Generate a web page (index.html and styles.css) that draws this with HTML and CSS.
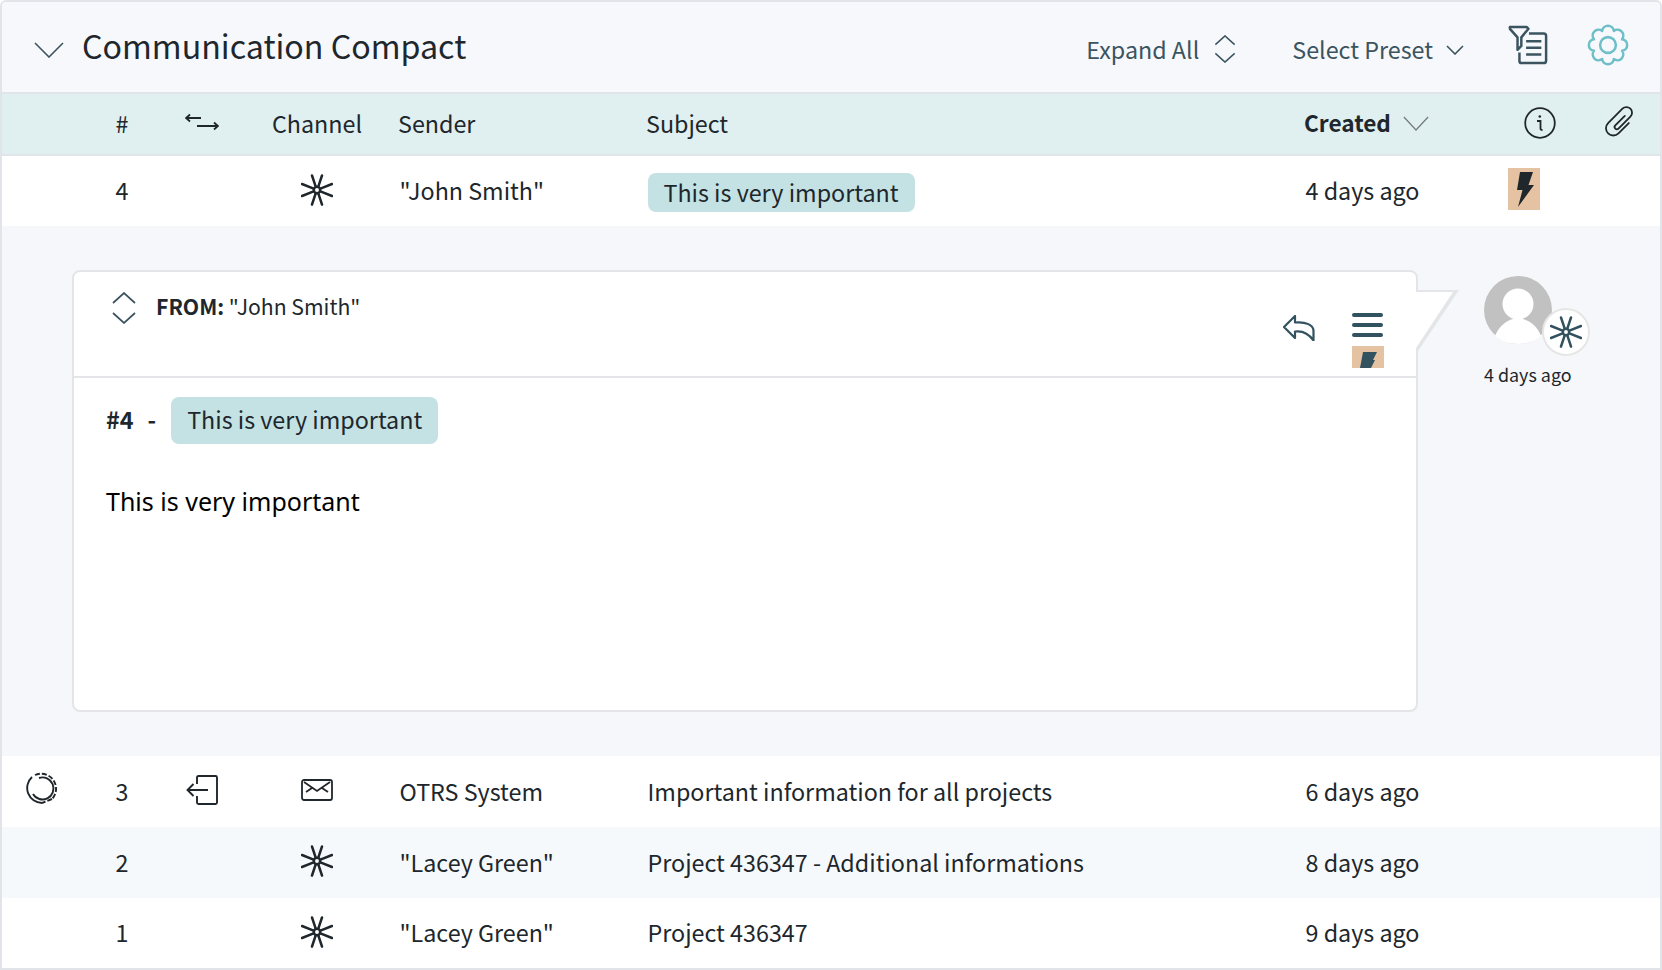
FILE: index.html
```html
<!DOCTYPE html>
<html lang="en">
<head>
    <meta charset="UTF-8">
    <title>Communication Compact</title>
    <link rel="stylesheet" href="styles.css">
</head>
<body>
    <svg class="defs" width="0" height="0">
        <symbol id="chat" viewBox="0 0 32 32">
            <path d="M11 1.500L14.700 12.700M21 1.500L17.300 12.700M1 10L12.600 14.600M31 10L19.400 14.600M1 22L12.600 17.400M31 22L19.400 17.400M11 30.500L14.700 19.300M21 30.500L17.300 19.300" fill="none" stroke="currentColor" stroke-width="2.500" stroke-linecap="round"/>
            <circle cx="16" cy="16" r="3.200" fill="none" stroke="currentColor" stroke-width="2.500"/>
        </symbol>
        <symbol id="updown" viewBox="0 0 24 32">
            <path d="M1 11L12 1L23 11M1 21L12 31L23 21" fill="none" stroke="currentColor" stroke-width="1.700"/>
        </symbol>
        <symbol id="bolt" viewBox="0 0 32 42">
            <path d="M12 4H25L20.500 17H26L10 39L14.500 22H9Z" fill="currentColor"/>
        </symbol>
    </svg>

    <div class="widget">
        <header class="widget-head">
            <svg class="collapse" viewBox="0 0 30 16"><path d="M1 1L15 15L29 1" fill="none" stroke="currentColor" stroke-width="1.600"/></svg>
            <h1 class="widget-title">Communication Compact</h1>
            <div class="widget-actions">
                <span class="action expand">Expand All <svg class="expand-icon"><use href="#updown"/></svg></span>
                <span class="action preset">Select Preset
                    <svg class="preset-icon" viewBox="0 0 18 10"><path d="M1 1L9 9L17 1" fill="none" stroke="currentColor" stroke-width="1.600"/></svg>
                </span>
                <svg class="filter-icon" viewBox="0 0 42 42">
                    <path d="M2 2H19.500L21.500 4L14 13V22L10 26V13L2 4Z" fill="none" stroke="currentColor" stroke-width="2.600" stroke-linejoin="round"/>
                    <path d="M22 9H37.500Q40 9 40 11.500V37.500Q40 40 37.500 40H14Q12 40 12 37.500V29M19 17H35M19 24H35M19 31H35" fill="none" stroke="currentColor" stroke-width="2.600"/>
                </svg>
                <svg class="gear-icon" viewBox="0 0 40 40">
                    <circle cx="20" cy="20" r="7.500" fill="none" stroke="currentColor" stroke-width="2.400"/>
                    <path d="M14.450 6.600A5.600 5.600 0 0 1 25.550 6.600A5.600 5.600 0 0 1 33.400 14.450A5.600 5.600 0 0 1 33.400 25.550A5.600 5.600 0 0 1 25.550 33.400A5.600 5.600 0 0 1 14.450 33.400A5.600 5.600 0 0 1 6.600 25.550A5.600 5.600 0 0 1 6.600 14.450A5.600 5.600 0 0 1 14.450 6.600Z" fill="none" stroke="currentColor" stroke-width="2.400" stroke-linejoin="round"/>
                </svg>
            </div>
        </header>

        <div class="row row-head">
            <span class="cell center">#</span>
            <span class="cell center">
                <svg class="dir-icon" viewBox="0 0 34 18"><path d="M1 5H16M5 1.500L1 5L5 8.500M12 13H33M29 9.500L33 13L29 16.500" fill="none" stroke="currentColor" stroke-width="1.800"/></svg>
            </span>
            <span class="cell center">Channel</span>
            <span class="cell">Sender</span>
            <span class="cell">Subject</span>
            <span class="cell created-head">Created
                <svg class="sort-icon" viewBox="0 0 28 16"><path d="M1 1L14 15L27 1" fill="none" stroke="currentColor" stroke-width="1.300"/></svg>
            </span>
            <span class="cell center">
                <svg class="info-icon" viewBox="0 0 32 32"><circle cx="16" cy="16" r="14.800" fill="none" stroke="currentColor" stroke-width="1.800"/><path d="M13 14H16.500V21.500Q16.500 23 18.500 23" fill="none" stroke="currentColor" stroke-width="1.800"/><circle cx="15.800" cy="9.500" r="1.300" fill="currentColor"/></svg>
            </span>
            <span class="cell center">
                <svg class="clip-icon" viewBox="0 0 32 32"><path d="M5 -3V10A6.500 6.500 0 0 1 -8 10V-8A5 5 0 0 1 2 -8V7A2 2 0 0 1 -2 7V-5" transform="translate(15.500 15.500) rotate(45)" fill="none" stroke="currentColor" stroke-width="1.600" stroke-linecap="round"/></svg>
            </span>
        </div>

        <div class="row row-first">
            <span class="cell center">4</span>
            <span class="cell"></span>
            <span class="cell center"><svg class="chan-icon"><use href="#chat"/></svg></span>
            <span class="cell sender">"John Smith"</span>
            <span class="cell subject"><span class="tag tag-row">This is very important</span></span>
            <span class="cell sender">4 days ago</span>
            <span class="cell"><span class="prio"><svg class="prio-icon"><use href="#bolt"/></svg></span></span>
            <span class="cell"></span>
        </div>

        <section class="thread">
            <article class="card">
                <div class="card-head">
                    <svg class="card-toggle"><use href="#updown"/></svg>
                    <div class="card-from"><b>FROM:</b> "John Smith"</div>
                    <div class="card-tools">
                        <svg class="reply-icon" viewBox="0 0 32 26"><path d="M12 1L1 12L12 23V16.500C20 15.500 26 19 30.500 25.500V16C30.500 10 23 6.500 12 7.500Z" fill="none" stroke="currentColor" stroke-width="2.200" stroke-linejoin="round"/></svg>
                        <div class="tool-stack">
                            <div class="burger"><i></i><i></i><i></i></div>
                            <span class="prio-clip"><svg class="clip-bolt" viewBox="0 0 32 22"><path d="M11 6H25L21 14H23L19 22H8Z" fill="currentColor"/></svg></span>
                        </div>
                    </div>
                </div>
                <div class="card-body">
                    <div class="card-subject"><b class="num">#4</b><b class="dash">-</b><span class="tag tag-big">This is very important</span></div>
                    <p class="card-text">This is very important</p>
                </div>
            </article>
            <aside class="author">
                <div class="avatar">
                    <svg class="avatar-img" viewBox="0 0 68 68"><circle cx="34" cy="34" r="34" fill="#c1c1c1"/><circle cx="34" cy="28" r="15.500" fill="#fff"/><path d="M11 60C15 50 23 43 34 42C45 43 53 50 57 60C51 65 43 68 34 68C25 68 17 65 11 60Z" fill="#fff"/></svg>
                    <span class="avatar-badge"><svg class="badge-icon"><use href="#chat"/></svg></span>
                </div>
                <div class="author-time">4 days ago</div>
            </aside>
        </section>

        <div class="row">
            <span class="cell flag">
                <svg class="flag-icon" viewBox="0 0 32 32">
                    <path d="M16 31A15 15 0 0 1 6 5" fill="none" stroke="currentColor" stroke-width="1.900"/>
                    <path d="M9 3A15 15 0 0 1 26 27M26 27L16 31" fill="none" stroke="currentColor" stroke-width="1.900" stroke-dasharray="5 2"/>
                    <path d="M13 6A11 11 0 1 1 7 22" fill="none" stroke="currentColor" stroke-width="1.900"/>
                </svg>
            </span>
            <span class="cell center">3</span>
            <span class="cell center">
                <svg class="in-icon" viewBox="0 0 32 30"><path d="M11 9V2.500Q11 1 12.500 1H29.500Q31 1 31 2.500V27.500Q31 29 29.500 29H12.500Q11 29 11 27.500V21M22 15H1.500M7.500 9L1.500 15L7.500 21" fill="none" stroke="currentColor" stroke-width="1.900"/></svg>
            </span>
            <span class="cell center">
                <svg class="mail-icon" viewBox="0 0 32 22"><rect x="1" y="1" width="30" height="20" rx="2" fill="none" stroke="currentColor" stroke-width="1.800"/><path d="M3 3L16 12L29 3M5 13L11 9M27 13L21 9" fill="none" stroke="currentColor" stroke-width="1.800"/></svg>
            </span>
            <span class="cell sender">OTRS System</span>
            <span class="cell subject">Important information for all projects</span>
            <span class="cell sender">6 days ago</span>
            <span class="cell"></span>
            <span class="cell"></span>
        </div>
        <div class="row row-alt">
            <span class="cell center">2</span>
            <span class="cell"></span>
            <span class="cell center"><svg class="chan-icon"><use href="#chat"/></svg></span>
            <span class="cell sender">"Lacey Green"</span>
            <span class="cell subject">Project 436347 - Additional informations</span>
            <span class="cell sender">8 days ago</span>
            <span class="cell"></span>
            <span class="cell"></span>
        </div>
        <div class="row row-last">
            <span class="cell center">1</span>
            <span class="cell"></span>
            <span class="cell center"><svg class="chan-icon"><use href="#chat"/></svg></span>
            <span class="cell sender">"Lacey Green"</span>
            <span class="cell subject">Project 436347</span>
            <span class="cell sender">9 days ago</span>
            <span class="cell"></span>
            <span class="cell"></span>
        </div>
    </div>
</body>
</html>
```

FILE: styles.css
```css
* {
    box-sizing: border-box;
}
body {
    margin: 0;
    background: #fff;
    color: #20272c;
    font-family: "Noto Sans CJK SC", "Noto Sans", sans-serif;
    font-size: 23.3px;
    line-height: 32px;
}
.defs {
    display: block;
    height: 0;
}
.widget {
    width: 1662px;
    height: 970px;
    display: flex;
    flex-direction: column;
    border: 2px solid #e1e4e8;
    border-radius: 6px 6px 0 0;
    overflow: hidden;
}
.widget-head {
    height: 92px;
    flex: none;
    display: flex;
    align-items: center;
    padding: 0 31px 0 32px;
    background: #f7f8fc;
    border-bottom: 2px solid #e1e4e8;
}
.collapse {
    width: 30px;
    height: 16px;
    margin-top: 6px;
    color: #3c5560;
}
.widget-title {
    margin: 0 0 4px 18px;
    font-size: 32.2px;
    font-weight: 400;
    line-height: 44px;
}
.widget-actions {
    margin-left: auto;
    display: flex;
    align-items: center;
    color: #3b5460;
}
.action {
    display: flex;
    align-items: center;
    margin-top: 4px;
}
.expand-icon {
    width: 22px;
    height: 28px;
    margin: 0 0 0 15px;
}
.preset {
    margin-left: 56px;
}
.preset-icon {
    width: 18px;
    height: 10px;
    margin: 2px 0 0 13px;
}
.filter-icon {
    width: 40px;
    height: 42px;
    margin: -4px 0 0 44px;
}
.gear-icon {
    width: 42px;
    height: 42px;
    margin: -4px 0 0 39px;
    color: #6fbfc8;
}
.row {
    flex: none;
    height: 71px;
    display: grid;
    grid-template-columns: 80px 80px 80px 150px 248px 658px 202px 80px 80px;
    align-items: center;
    padding-bottom: 2px;
    background: #fff;
}
.row-first,
.row-last {
    height: 70px;
}
.row > .cell:first-child:not(.flag) {
    grid-column: 2;
}
.row-alt {
    background: #f6f9fb;
}
.row-head {
    height: 62px;
    background: #e0f0f0;
    border-bottom: 2px solid #e1e4e8;
}
.cell.center {
    text-align: center;
}
.row-head .cell {
    padding-left: 6px;
}
.row-head .cell.center {
    padding-left: 0;
}
.flag {
    padding-left: 24px;
    display: flex;
}
.sender,
.subject {
    padding-left: 7.5px;
}
.created-head {
    display: flex;
    align-items: center;
    font-size: 22.6px;
    font-weight: 700;
}
.sort-icon {
    width: 26px;
    height: 15px;
    margin-left: 12px;
    color: #74797c;
}
.dir-icon {
    width: 34px;
    height: 18px;
    vertical-align: middle;
    margin-top: -9px;
}
.info-icon {
    width: 32px;
    height: 32px;
    vertical-align: middle;
    margin-top: -6px;
}
.clip-icon {
    width: 36px;
    height: 36px;
    vertical-align: middle;
    margin: -7px 0 0 6px;
}
.chan-icon {
    display: block;
    width: 32px;
    height: 32px;
    margin: -1px auto 0;
}
.tag {
    display: inline-block;
    padding: 0 16px;
    height: 39px;
    line-height: 39px;
    background: #c4e2e3;
    border-radius: 8px;
}
.tag-row {
    margin-top: 4px;
}
.tag-big {
    height: 47px;
    line-height: 44px;
}
.num,
.dash {
    margin-bottom: 3px;
}
.prio {
    display: block;
    width: 32px;
    height: 42px;
    margin: -2px 0 0 8px;
    background: #e5c3a2;
}
.prio-icon {
    display: block;
    width: 32px;
    height: 42px;
}
.thread {
    flex: none;
    height: 530px;
    display: flex;
    align-items: flex-start;
    padding: 44px 0 0 70px;
    background: #f6f7fb;
}
.card {
    position: relative;
    width: 1346px;
    height: 442px;
    background: #fff;
    border: 2px solid #e4e5e8;
    border-radius: 8px;
}
/* speech tail on the right of the card */
.card::after {
    content: "";
    position: absolute;
    top: 18px;
    left: 100%;
    width: 43px;
    height: 64px;
    background: #e4e5e8;
    clip-path: polygon(0 0, 100% 0, 0 100%);
}
.card::before {
    content: "";
    position: absolute;
    z-index: 1;
    top: 20px;
    left: 100%;
    width: 37px;
    height: 56px;
    background: #fff;
    clip-path: polygon(0 0, 100% 0, 0 100%);
}
.card-head {
    height: 106px;
    display: flex;
    padding: 20px 32px 0 38px;
    border-bottom: 2px solid #e4e5e8;
}
.card-toggle {
    width: 24px;
    height: 32px;
    color: #3b5460;
}
.card-from {
    margin-left: 20px;
    font-size: 21.2px;
    line-height: 28px;
}
.card-tools {
    margin-left: auto;
    display: flex;
    align-items: flex-start;
    color: #32525f;
}
.reply-icon {
    width: 32px;
    height: 26px;
    margin-top: 23px;
}
.tool-stack {
    margin-left: 37px;
    padding-top: 21px;
}
.burger {
    width: 31px;
    display: flex;
    flex-direction: column;
    gap: 6px;
}
.burger i {
    display: block;
    height: 4px;
    border-radius: 2px;
    background: #32525f;
}
.prio-clip {
    display: block;
    width: 32px;
    height: 22px;
    margin-top: 9px;
    background: #e5c3a2;
}
.clip-bolt {
    display: block;
    width: 32px;
    height: 22px;
}
.card-body {
    padding: 19px 32px;
}
.card-subject {
    display: flex;
    align-items: center;
}
.dash {
    margin-left: 14px;
    margin-right: 15px;
}
.card-text {
    margin: 41px 0 0;
    font-family: "Noto Sans", sans-serif;
    font-size: 25px;
    color: #000;
}
.author {
    margin-left: 66px;
    padding-top: 6px;
    font-size: 17.9px;
    line-height: 24px;
}
.avatar {
    position: relative;
    width: 68px;
    height: 68px;
}
.avatar-img {
    display: block;
    width: 68px;
    height: 68px;
}
.avatar-badge {
    position: absolute;
    left: 58px;
    top: 32px;
    width: 48px;
    height: 48px;
    display: flex;
    align-items: center;
    justify-content: center;
    background: #fff;
    border: 2px solid #e6e6e6;
    border-radius: 50%;
    color: #32525f;
}
.badge-icon {
    width: 32px;
    height: 32px;
}
.author-time {
    margin-top: 18px;
    white-space: nowrap;
}
.flag-icon {
    width: 32px;
    height: 32px;
    margin-top: -6px;
}
.in-icon {
    width: 32px;
    height: 30px;
    vertical-align: middle;
    margin-top: -8px;
}
.mail-icon {
    width: 32px;
    height: 22px;
    vertical-align: middle;
    margin-top: -9px;
}
```
